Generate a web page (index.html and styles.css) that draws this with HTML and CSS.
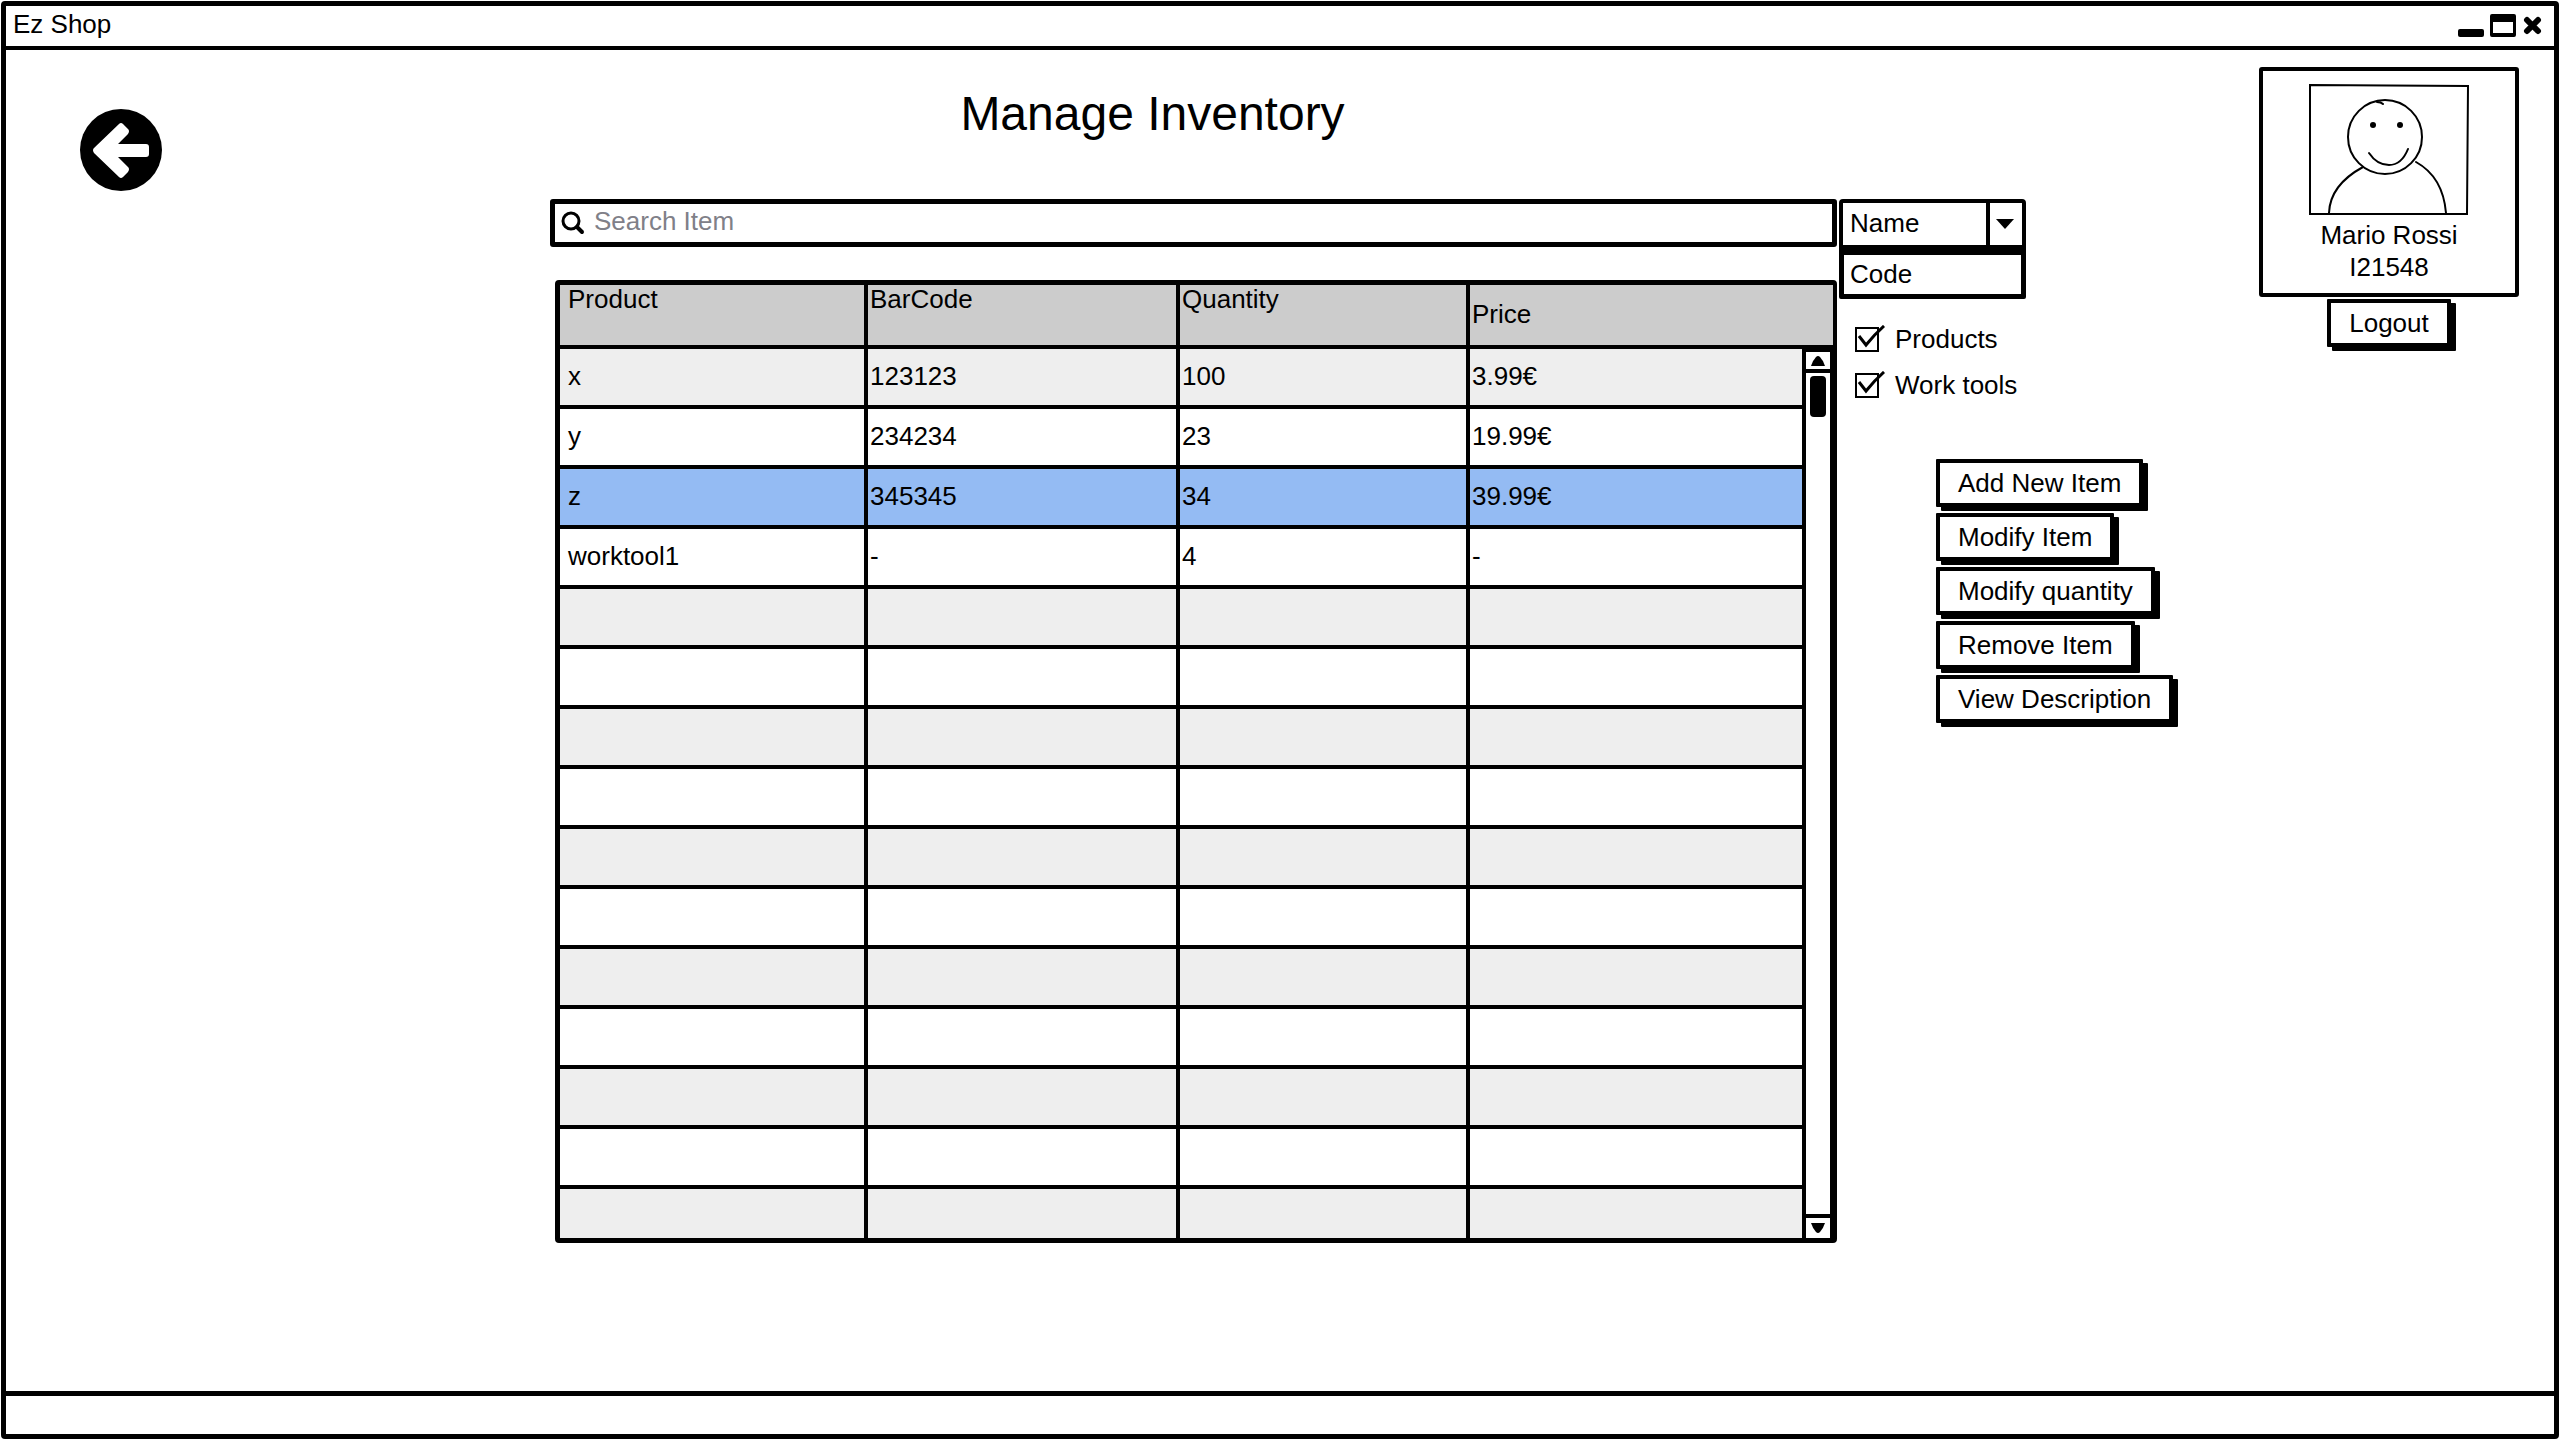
FILE: index.html
```
<!DOCTYPE html>
<html lang="en">
<head>
  <meta charset="utf-8">
  <meta name="viewport" content="width=device-width, initial-scale=1">
  <title>Ez Shop</title>
  <link rel="stylesheet" href="styles.css">
</head>
<body>
  <div class="window">
    <header class="titlebar">
      <span class="titlebar-name">Ez Shop</span>
      <svg class="window-controls" width="84" height="24" viewBox="0 0 84 24" aria-hidden="true">
        <rect x="0" y="15" width="26" height="8" rx="2"/>
        <path fill-rule="evenodd" d="M34 0H56Q58 0 58 2V21Q58 23 56 23H34Q32 23 32 21V2Q32 0 34 0ZM35 8V19H55V8Z"/>
        <path d="M69 6L80 17M80 6L69 17" fill="none" stroke="#000" stroke-width="6" stroke-linecap="round"/>
      </svg>
    </header>

    <main class="content">
      <div class="back-area">
        <button class="back" type="button" aria-label="Back">
          <svg width="83" height="83" viewBox="0 0 83 83" aria-hidden="true">
            <circle cx="41" cy="41" r="41"/>
            <path fill="#fff" d="M14 39L39 15Q41 13 43 15L48 20Q50 22 48 25L38 35H66Q69 35 69 38V45Q69 48 66 48H38L48 58Q50 60 48 63L43 68Q41 70 39 68L14 44Q12 41 14 39Z"/>
          </svg>
        </button>
      </div>

      <section class="inventory">
        <h1 class="heading">Manage Inventory</h1>
        <label class="search">
          <svg width="24" height="24" viewBox="0 0 24 24" aria-hidden="true">
            <circle cx="10" cy="10" r="8" fill="none" stroke="#000" stroke-width="3"/>
            <path d="M16 16L21 21" stroke="#000" stroke-width="4" stroke-linecap="round"/>
          </svg>
          <input class="search-input" type="search" placeholder="Search Item" aria-label="Search Item">
        </label>

        <table class="items">
          <colgroup>
            <col class="col-product"><col class="col-barcode"><col class="col-quantity"><col class="col-price"><col class="col-scroll">
          </colgroup>
          <thead>
            <tr><th>Product</th><th>BarCode</th><th>Quantity</th><th class="price-head" colspan="2">Price</th></tr>
          </thead>
          <tbody>
            <tr>
              <td>x</td><td>123123</td><td>100</td><td>3.99€</td>
              <td class="scroll-cell" rowspan="15">
                <div class="scrollbar">
                  <div class="scroll-end scroll-up"><svg width="16" height="12" viewBox="0 0 16 12" aria-hidden="true"><path d="M1 11Q3 5 6 2Q8 0 10 2Q13 5 15 11Z"/></svg></div>
                  <div class="scroll-thumb"></div>
                  <div class="scroll-end scroll-down"><svg width="16" height="12" viewBox="0 0 16 12" aria-hidden="true"><path d="M1 1H15Q13 7 10 10Q8 12 6 10Q3 7 1 1Z"/></svg></div>
                </div>
              </td>
            </tr>
            <tr><td>y</td><td>234234</td><td>23</td><td>19.99€</td></tr>
            <tr class="selected"><td>z</td><td>345345</td><td>34</td><td>39.99€</td></tr>
            <tr><td>worktool1</td><td>-</td><td>4</td><td>-</td></tr>
            <tr><td></td><td></td><td></td><td></td></tr>
            <tr><td></td><td></td><td></td><td></td></tr>
            <tr><td></td><td></td><td></td><td></td></tr>
            <tr><td></td><td></td><td></td><td></td></tr>
            <tr><td></td><td></td><td></td><td></td></tr>
            <tr><td></td><td></td><td></td><td></td></tr>
            <tr><td></td><td></td><td></td><td></td></tr>
            <tr><td></td><td></td><td></td><td></td></tr>
            <tr><td></td><td></td><td></td><td></td></tr>
            <tr><td></td><td></td><td></td><td></td></tr>
            <tr class="last"><td></td><td></td><td></td><td></td></tr>
          </tbody>
        </table>
      </section>

      <aside class="tools">
        <div class="combo">
          <select class="combo-select" aria-label="Search by">
            <option>Name</option>
            <option>Code</option>
          </select>
          <span class="combo-arrow"><svg width="18" height="10" viewBox="0 0 18 10" aria-hidden="true"><path d="M0 0H18L9 10Z"/></svg></span>
        </div>
        <ul class="combo-list"><li>Code</li></ul>

        <div class="filters">
          <label class="filter">
            <span class="tick">
              <input type="checkbox" checked>
              <svg width="32" height="28" viewBox="0 0 32 28" aria-hidden="true"><path d="M4 11L11 20Q19 10 29 1" fill="none" stroke="#000" stroke-width="3"/></svg>
            </span>
            Products
          </label>
          <label class="filter">
            <span class="tick">
              <input type="checkbox" checked>
              <svg width="32" height="28" viewBox="0 0 32 28" aria-hidden="true"><path d="M4 11L11 20Q19 10 29 1" fill="none" stroke="#000" stroke-width="3"/></svg>
            </span>
            Work tools
          </label>
        </div>

        <div class="actions">
          <button class="button" type="button">Add New Item</button>
          <button class="button" type="button">Modify Item</button>
          <button class="button" type="button">Modify quantity</button>
          <button class="button" type="button">Remove Item</button>
          <button class="button" type="button">View Description</button>
        </div>
      </aside>

      <aside class="account">
        <div class="card">
          <svg class="avatar" width="160" height="131" viewBox="0 0 160 131" role="img" aria-label="User picture">
            <g fill="none" stroke="#000" stroke-width="2" stroke-linecap="round">
              <path d="M1 1L159 2L158 130H1Z"/>
              <circle cx="76" cy="53" r="37"/>
              <path d="M68 18Q72 18 74 20"/>
              <path d="M60 69C66 78 73 81 80 81C89 81 95 75 99 65"/>
              <path d="M54 83Q21 101 20 129M107 78Q134 93 137 129"/>
            </g>
            <circle cx="64" cy="41" r="3"/>
            <circle cx="91" cy="41" r="3"/>
          </svg>
          <div class="user">Mario Rossi</div>
          <div class="user">I21548</div>
        </div>
        <button class="button" type="button">Logout</button>
      </aside>
    </main>

    <footer class="statusbar"></footer>
  </div>
</body>
</html>
```
FILE: styles.css
```
* { box-sizing: border-box; }

body {
  margin: 0;
  background: #fff;
  color: #000;
  font: 26px/32px "Liberation Sans", Arial, sans-serif;
}

button, input, select { font: inherit; color: inherit; }

.window {
  display: flex;
  flex-direction: column;
  min-height: calc(100vh - 2px);
  margin: 1px;
  border: 5px solid #000;
  border-radius: 4px;
}

.titlebar {
  display: flex;
  justify-content: space-between;
  height: 44px;
  padding: 2px 12px 0 7px;
  border-bottom: 4px solid #000;
}

.window-controls { margin-top: 6px; }

.content {
  flex: 1;
  display: grid;
  grid-template-columns: 544px minmax(500px, 1fr) 422px 260px;
  padding-right: 35px;
}

.back-area { padding: 59px 0 0 74px; }

.back {
  display: block;
  padding: 0;
  border: 0;
  background: none;
}

.back svg { display: block; }

.heading {
  margin: 36px 82px 57px 0;
  font-size: 48px;
  line-height: 56px;
  font-weight: 400;
  text-align: center;
}

.search {
  display: flex;
  align-items: center;
  gap: 9px;
  height: 48px;
  padding-left: 6px;
  border: 5px solid #000;
  border-radius: 3px;
}

.search-input {
  flex: 1;
  height: 32px;
  margin-bottom: 4px;
  padding: 0;
  border: 0;
  outline: 0;
  background: none;
}

.search-input::placeholder { color: #808088; opacity: 1; }

.items {
  width: calc(100% - 5px);
  margin: 33px 0 0 5px;
  table-layout: fixed;
  border-collapse: separate;
  border-spacing: 0;
  border: 5px solid #000;
  border-right-width: 4px;
  border-radius: 4px;
}

.col-product { width: 308px; }
.col-barcode { width: 312px; }
.col-quantity { width: 290px; }
.col-scroll { width: 27px; }

.items th, .items td {
  padding: 0 2px 2px;
  border-right: 4px solid #000;
  border-bottom: 4px solid #000;
  text-align: left;
  font-weight: 400;
}

.items th {
  height: 64px;
  background: #ccc;
  line-height: 28px;
  vertical-align: top;
}

.items .price-head {
  border-right: 0;
  vertical-align: middle;
}

.items th:first-child, .items td:first-child { padding-left: 8px; }

.items td { height: 60px; }
.items .last td { height: 49px; border-bottom: 0; }

.items tr:nth-child(odd) td { background: #eee; }
.items tr.selected td { background: #94bbf3; }

.items tr:nth-child(odd) .scroll-cell {
  height: 1px;
  padding: 0;
  border-right-width: 3px;
  border-bottom: 0;
  background: #fff;
}

.scrollbar {
  display: flex;
  flex-direction: column;
  height: 889px;
}

.scroll-end {
  display: flex;
  justify-content: center;
  align-items: center;
  height: 24px;
}

.scroll-up { border-top: 3px solid #000; border-bottom: 4px solid #000; }
.scroll-down { margin-top: auto; border-top: 4px solid #000; }

.scroll-thumb {
  width: 16px;
  height: 41px;
  margin: 3px auto 0;
  border-radius: 4px;
  background: #000;
}

.tools { padding: 149px 0 0 2px; }

.combo {
  display: flex;
  width: 187px;
  height: 50px;
  border: 4px solid #000;
  border-radius: 4px 4px 0 0;
}

.combo-select {
  flex: 1;
  min-width: 0;
  padding: 0 0 2px 7px;
  border: 0;
  background: none;
  appearance: none;
}

.combo-arrow {
  display: flex;
  justify-content: center;
  align-items: center;
  width: 36px;
  padding-right: 2px;
  border-left: 4px solid #000;
}

.combo-list {
  width: 187px;
  margin: 0;
  padding: 3px 0 4px 6px;
  border: 5px solid #000;
  border-top-width: 6px;
  border-radius: 0 0 2px 2px;
  list-style: none;
}

.filters { padding: 17px 0 0 16px; }

.filter {
  display: flex;
  align-items: center;
  gap: 16px;
  height: 46px;
}

.tick { position: relative; width: 24px; height: 25px; }

.tick input {
  display: block;
  width: 24px;
  height: 25px;
  margin: 0;
  border: 2px solid #000;
  appearance: none;
}

.tick svg { position: absolute; left: 0; top: -2px; }

.actions {
  display: flex;
  flex-direction: column;
  align-items: flex-start;
  gap: 6px;
  padding: 51px 0 0 97px;
}

.button {
  height: 48px;
  padding: 0 18px;
  border: 4px solid #000;
  border-radius: 1px;
  background: #fff;
  box-shadow: 5px 4px 0 #000;
}

.account {
  display: flex;
  flex-direction: column;
  align-items: center;
  gap: 2px;
  padding-top: 17px;
}

.card {
  width: 100%;
  padding: 13px 0 10px;
  border: 4px solid #000;
  border-radius: 3px;
  text-align: center;
}

.avatar { display: block; margin: 0 auto 4px; }

.statusbar { height: 43px; border-top: 5px solid #000; }
```
